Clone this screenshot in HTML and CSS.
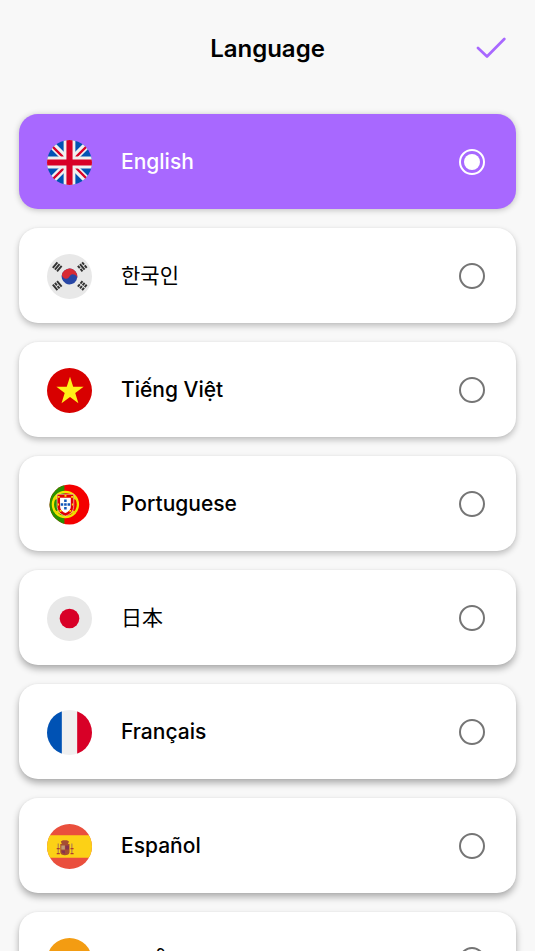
FILE: index.html
```html
<!DOCTYPE html>
<html lang="en">
<head>
<meta charset="utf-8">
<meta name="viewport" content="width=device-width, initial-scale=1">
<title>Language</title>
<link rel="stylesheet" href="styles.css">
</head>
<body>
<form class="screen">
  <header class="header">
    <h1 class="title">Language</h1>
    <button class="confirm" type="submit" aria-label="Confirm">
      <svg viewBox="0 0 30 24" aria-hidden="true"><path d="M2 11L11 19.500L28.300 2"/></svg>
    </button>
  </header>
  <main class="list">
    <label class="option">
      <svg class="flag" viewBox="0 0 44 44" aria-hidden="true">
        <clipPath id="round"><circle cx="22" cy="22" r="22"/></clipPath>
        <g clip-path="url(#round)">
          <path fill="#0052b4" d="M0 0h44v44H0z"/>
          <path stroke="#f0f0f0" stroke-width="7" d="M0 0l44 44M44 0L0 44"/>
          <path stroke="#d80027" stroke-width="2.200" d="M4 5l13 13M27 18L40 5M26 25l14 14M18 26L4 40"/>
          <path stroke="#f0f0f0" stroke-width="11.500" d="M22 0v44M0 22h44"/>
          <path stroke="#d80027" stroke-width="6" d="M22 0v44M0 22h44"/>
        </g>
      </svg>
      <span class="name">English</span>
      <input class="radio" type="radio" name="language" value="en" checked>
    </label>
    <label class="option">
      <svg class="flag" viewBox="0 0 44 44" aria-hidden="true">
        <circle cx="22" cy="22" r="22" fill="#e8e8e8"/>
        <g transform="rotate(28 22 22)">
          <circle cx="22" cy="22" r="7.700" fill="#2746a5"/>
          <path fill="#d82a34" d="M14.300 22a7.700 7.700 0 0 1 15.400 0a3.850 3.850 0 0 0-7.700 0a3.850 3.850 0 0 1-7.700 0"/>
        </g>
        <g stroke="#333" stroke-width="1.900">
          <path transform="translate(10 12.500) rotate(-50)" d="M-3.500-2.700h7M-3.500 0h7M-3.500 2.700h7"/>
          <path transform="translate(34.500 12.500) rotate(50)" d="M-3.500-2.700h3M.5-2.700h3M-3.500 0h7M-3.500 2.700h3M.5 2.700h3"/>
          <path transform="translate(10 31) rotate(50)" d="M-3.500-2.700h7M-3.500 0h3M.5 0h3M-3.500 2.700h7"/>
          <path transform="translate(34.500 31) rotate(-50)" d="M-3.500-2.700h3M.5-2.700h3M-3.500 0h3M.5 0h3M-3.500 2.700h3M.5 2.700h3"/>
        </g>
      </svg>
      <span class="name" lang="ko">한국인</span>
      <input class="radio" type="radio" name="language" value="ko">
    </label>
    <label class="option">
      <svg class="flag" viewBox="0 0 44 44" aria-hidden="true">
        <circle cx="22" cy="22" r="22" fill="#d80000"/>
        <path fill="#fff018" d="M22.500 8.500L25.600 18.400H35.800L27.600 24.500L30.700 34.500L22.500 28.400L14.200 34.500L17.300 24.500L9.200 18.400H19.300z"/>
      </svg>
      <span class="name" lang="vi">Tiếng Việt</span>
      <input class="radio" type="radio" name="language" value="vi">
    </label>
    <label class="option">
      <svg class="flag" viewBox="0 0 44 44" aria-hidden="true">
        <clipPath id="small"><circle cx="22" cy="22" r="19.500"/></clipPath>
        <g clip-path="url(#small)">
          <path fill="#f40000" d="M0 0h44v44H0z"/>
          <path fill="#299100" d="M0 0h17v44H0z"/>
        </g>
        <g transform="translate(18 22) scale(1.250) translate(-18 -22)">
          <circle cx="18" cy="22" r="9.800" fill="none" stroke="#f2e500" stroke-width="1.800"/>
          <path stroke="#e8d900" stroke-width="1.200" fill="none" d="M9 18c6-3 12-3 18 0M9 27c6 3 12 3 18 0M10 16l16 13M26 16L10 29"/>
          <path fill="#e00000" stroke="#f3ead0" stroke-width=".5" d="M11.500 14h13v9c0 4-2.500 7-6.500 8c-4-1-6.500-4-6.500-8z"/>
          <path fill="#fff" d="M13.800 16.800h8.400v6.400c0 3-1.700 4.500-4.200 5.500c-2.500-1-4.200-2.500-4.200-5.500z"/>
          <path stroke="#1557b8" stroke-width="1.900" d="M17 19h2M14.300 22h2M17 22h2M19.700 22h2M17 25h2"/>
          <path stroke="#ffe000" stroke-width="1.400" d="M12 16h1.500M17.300 15.300h1.500M22.500 16H24M12 22h1M23 22h1M13.500 27h1.500M21 27h1.500"/>
        </g>
      </svg>
      <span class="name">Portuguese</span>
      <input class="radio" type="radio" name="language" value="pt">
    </label>
    <label class="option">
      <svg class="flag" viewBox="0 0 44 44" aria-hidden="true">
        <circle cx="22" cy="22" r="22" fill="#e8e8e8"/>
        <circle cx="22" cy="22" r="9.600" fill="#d80027"/>
      </svg>
      <span class="name" lang="ja">日本</span>
      <input class="radio" type="radio" name="language" value="ja">
    </label>
    <label class="option">
      <svg class="flag" viewBox="0 0 44 44" aria-hidden="true">
        <g clip-path="url(#round)">
          <path fill="#f0f0f0" d="M0 0h44v44H0z"/>
          <path fill="#0052b4" d="M0 0h14.500v44H0z"/>
          <path fill="#d80027" d="M29.500 0H44v44H29.500z"/>
        </g>
      </svg>
      <span class="name" lang="fr">Français</span>
      <input class="radio" type="radio" name="language" value="fr">
    </label>
    <label class="option">
      <svg class="flag" viewBox="0 0 44 44" aria-hidden="true">
        <g clip-path="url(#round)">
          <path fill="#ea4f3d" d="M0 0h44v44H0z"/>
          <path fill="#fcd116" d="M0 11h44v22H0z"/>
        </g>
        <path fill="#a64d32" d="M14.500 19.500l-1-2.500l2-1h4l2 1l-1 2.500h1.500v8c0 2-2 3-4.500 3s-4.500-1-4.500-3v-8z"/>
        <path fill="#bf9a75" d="M14 21h3.500v4H14z"/>
        <path fill="#873250" d="M18 21h3.500v4H18zM14 26h3.500v3l-2.500-1z"/>
        <path stroke="#b98a4a" stroke-width="1.300" d="M11 19v10M24.300 19v10"/>
        <path stroke="#b13b2c" stroke-width="1.300" d="M9.500 24h3M23 24h3M9.500 29h3M23 29h3"/>
      </svg>
      <span class="name" lang="es">Español</span>
      <input class="radio" type="radio" name="language" value="es">
    </label>
    <label class="option">
      <svg class="flag" viewBox="0 0 44 44" aria-hidden="true">
        <g clip-path="url(#round)">
          <path fill="#f39c12" d="M0 0h44v15H0z"/>
          <path fill="#f0f0f0" d="M0 15h44v14H0z"/>
          <path fill="#249f58" d="M0 29h44v15H0z"/>
        </g>
        <circle cx="22" cy="22" r="5" fill="none" stroke="#2746a5" stroke-width="1.500"/>
      </svg>
      <span class="name" lang="hi">भारतीय</span>
      <input class="radio" type="radio" name="language" value="hi">
    </label>
  </main>
</form>
</body>
</html>
```
FILE: styles.css
```css
* {
  box-sizing: border-box;
}

body {
  margin: 0;
  background: #f8f8f8;
  color: #000;
  font-family: Inter, "Noto Sans CJK KR", "Noto Sans", sans-serif;
}

.screen {
  display: flex;
  flex-direction: column;
  height: 100vh;
  overflow: hidden;
}

.header {
  flex: none;
  display: grid;
  grid-template-columns: 1fr auto 1fr;
  align-items: center;
  height: 98px;
  padding: 0 29px;
}

.title {
  grid-column: 2;
  margin: 0;
  font-size: 24px;
  font-weight: 600;
  line-height: 32px;
}

.confirm {
  justify-self: end;
  display: flex;
  padding: 0;
  border: 0;
  background: none;
  cursor: pointer;
}

.confirm svg {
  width: 30px;
  height: 24px;
  fill: none;
  stroke: #a868ff;
  stroke-width: 2.7;
  stroke-linecap: round;
  stroke-linejoin: round;
}

.list {
  flex: 1;
  display: flex;
  flex-direction: column;
  gap: 19px;
  min-height: 0;
  padding: 16px 19px;
  overflow: hidden;
}

.option {
  flex: none;
  display: flex;
  align-items: center;
  gap: 29px;
  height: 95px;
  padding: 1px 31px 0 28px;
  border-radius: 19px;
  background: #fff;
  box-shadow: 0 3px 6px rgb(0 0 0 / 24%), 0 0 2px rgb(0 0 0 / 6%);
  cursor: pointer;
}

.option:nth-child(n + 5) {
  box-shadow: 0 4px 7px rgb(0 0 0 / 31%), 0 0 2px rgb(0 0 0 / 6%);
}

.option:has(:checked) {
  background: #a868ff;
  color: #fff;
  box-shadow: 0 1px 6px rgb(0 0 0 / 24%);
}

.flag {
  flex: none;
  width: 45px;
  height: 45px;
}

.name {
  flex: 1;
  font-size: 21px;
  font-weight: 500;
  line-height: 32px;
}

.name:lang(ko),
.name:lang(ja),
.name:lang(hi) {
  font-weight: 400;
}

.name:lang(ja) {
  font-family: Inter, "Noto Sans CJK JP", sans-serif;
}

.radio {
  flex: none;
  width: 26px;
  height: 26px;
  margin: 0;
  border: 2px solid #757575;
  border-radius: 50%;
  appearance: none;
  cursor: pointer;
}

.radio:checked {
  padding: 3px;
  border-color: #fff;
  background: #fff content-box;
}
```
